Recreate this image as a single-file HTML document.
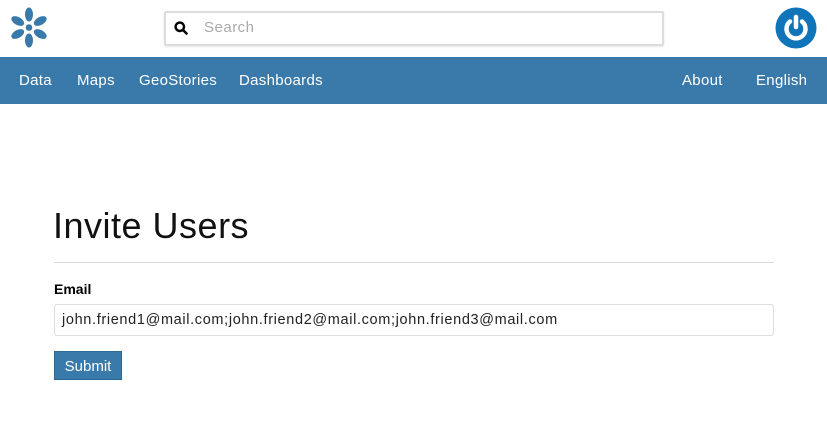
<!DOCTYPE html>
<html><head><style>
body{margin:0;width:827px;height:440px;background:#fff;font-family:"Liberation Sans",sans-serif;position:relative;overflow:hidden;color:#000}
.a{position:absolute;white-space:nowrap}
.nav{position:absolute;left:0;top:57px;width:827px;height:47px;background:#397aab}
.nav span{position:absolute;top:15px;color:#fff;font-size:15px;letter-spacing:0.3px}
</style></head><body>
<svg class="a" style="left:9px;top:7px" width="40" height="41" viewBox="0 0 40 41">
<g fill="#3a7aab" transform="translate(20,20.5)">
<circle r="3.3"/>
<g id="p"><ellipse cx="0" cy="-13" rx="4" ry="7"/></g>
<use href="#p" transform="rotate(60)"/><use href="#p" transform="rotate(120)"/>
<use href="#p" transform="rotate(180)"/><use href="#p" transform="rotate(240)"/><use href="#p" transform="rotate(300)"/>
</g></svg>
<div class="a" style="left:164px;top:11px;width:496px;height:31px;border:2px solid #ddd;border-radius:2px;box-shadow:0 1px 2px rgba(0,0,0,.1)"></div>
<svg class="a" style="left:174px;top:21px" width="14" height="14" viewBox="0 0 14 14"><circle cx="5.8" cy="5.8" r="4.2" fill="none" stroke="#000" stroke-width="2.4"/><line x1="9" y1="9" x2="12.5" y2="12.5" stroke="#000" stroke-width="2.6" stroke-linecap="round"/></svg>
<div class="a" style="left:204px;top:19px;font-size:15px;color:#aaa;letter-spacing:0.5px">Search</div>
<svg class="a" style="left:775px;top:7px" width="42" height="42" viewBox="0 0 42 42">
<circle cx="21" cy="21" r="20.5" fill="#0f74b8"/>
<path d="M15 14.5 A9.5 9.5 0 1 0 27 14.5" fill="none" stroke="#fff" stroke-width="4.5" stroke-linecap="round"/>
<line x1="21" y1="10" x2="21" y2="20" stroke="#fff" stroke-width="4.5" stroke-linecap="round"/>
</svg>
<div class="nav">
<span style="left:19px">Data</span><span style="left:77px">Maps</span><span style="left:139px">GeoStories</span><span style="left:239px">Dashboards</span>
<span style="left:682px">About</span><span style="left:756px">English</span>
</div>
<div class="a" style="left:53px;top:205px;font-size:36px;color:#111;letter-spacing:0.5px">Invite Users</div>
<div class="a" style="left:54px;top:262px;width:720px;height:1px;background:#ddd"></div>
<div class="a" style="left:54px;top:281px;font-size:14px;font-weight:bold">Email</div>
<div class="a" style="left:54px;top:304px;width:718px;height:30px;border:1px solid #ddd;border-radius:3px"></div>
<div class="a" style="left:62px;top:312px;font-size:14.5px;color:#222;letter-spacing:0.65px">john.friend1@mail.com;john.friend2@mail.com;john.friend3@mail.com</div>
<div class="a" style="left:54px;top:351px;width:68px;height:29px;background:#3a7aab;border:1px solid #2f6a96;box-sizing:border-box;color:#fff;font-size:15px;text-align:center;line-height:29px">Submit</div>
</body></html>
